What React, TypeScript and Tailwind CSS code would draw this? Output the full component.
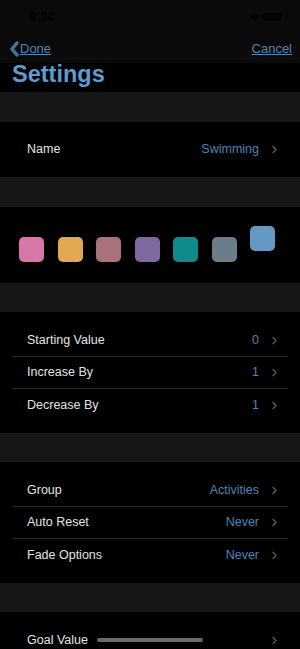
import { ChevronRight } from "lucide-react";

const font = { fontFamily: '"Liberation Sans", Arial, sans-serif' };

const swatches = ["#d677a7", "#e2a852", "#a8717b", "#8068a1", "#0f8b8e", "#6c7c89"];

const Band = () => <div className="h-[29.5px] bg-[#161616]" />;

const Row = ({
  label,
  value,
  last
}: {
  label: string;
  value?: string;
  last?: boolean;
}) => {
  return (
    <div className="relative flex h-[32.5px] items-center pl-[27px] pr-[19px]">
      <span className="flex-1 text-[12.5px] text-[#e4e4e4]">{label}</span>
      {value && <span className="text-[12.5px] text-[#4e84b5]">{value}</span>}
      <ChevronRight className="ml-[9px] h-[13px] w-[13px] text-[#5e5e5e]" strokeWidth={2} />
      {!last && <div className="absolute bottom-0 left-[12px] right-[12px] h-px bg-[#2b2b2b]" />}
    </div>
  );
};

const Section = ({ children }: { children: React.ReactNode }) => (
  <div className="bg-black pt-[12px] pb-[11px]">{children}</div>
);

export default function App() {
  return (
    <div className="relative h-[649px] w-[300px] overflow-hidden bg-black" style={font}>
      <div className="h-[63px] bg-[#0a0a0a]">
        <div className="flex h-[34px] items-center justify-between pl-[29px] pr-[19px]">
          <span className="text-[13px] font-bold text-[#020202]">9:30</span>
          <div className="flex items-center gap-[3px]">
            <svg width="11" height="8" viewBox="0 0 11 8">
              <path d="M0.5 3 Q5.5 -1.5 10.5 3 L5.5 8 Z" fill="#030303" />
            </svg>
            <div className="h-[8px] w-[18px] rounded-[2px] bg-[#030303]" />
          </div>
        </div>
        <div className="flex items-center justify-between pl-[9px] pr-[8px] pt-[5px]">
          <div className="flex items-center">
            <svg width="11" height="16" viewBox="0 0 11 16">
              <path d="M8 2 L3 8 L8 14" fill="none" stroke="#3f74a6" strokeWidth="3.5" strokeLinecap="round" strokeLinejoin="round" />
            </svg>
            <span className="text-[13px] text-[#4f86b8] underline">Done</span>
          </div>
          <span className="text-[13px] text-[#4f86b8] underline">Cancel</span>
        </div>
      </div>
      <div className="flex h-[29px] items-start bg-black pl-[12px]">
        <h1 className="text-[23.5px] font-bold leading-none text-[#5f9bd0]">Settings</h1>
      </div>

      <Band />
      <Section>
        <Row label="Name" value="Swimming" last />
      </Section>
      <Band />
      <div className="flex h-[76px] items-end gap-[13.5px] bg-black pb-[21px] pl-[19px]">
        {swatches.map((c) => (
          <div key={c} className="h-[25px] w-[25px] rounded-[5px]" style={{ backgroundColor: c }} />
        ))}
        <div className="mb-[11px] h-[25px] w-[25px] rounded-[5px] bg-[#6599c5]" />
      </div>
      <Band />
      <Section>
        <Row label="Starting Value" value="0" />
        <Row label="Increase By" value="1" />
        <Row label="Decrease By" value="1" last />
      </Section>
      <Band />
      <Section>
        <Row label="Group" value="Activities" />
        <Row label="Auto Reset" value="Never" />
        <Row label="Fade Options" value="Never" last />
      </Section>
      <Band />
      <Section>
        <Row label="Goal Value" last />
      </Section>

      <div className="absolute bottom-[7px] left-[97px] h-[4px] w-[106px] rounded-full bg-[#6b6b6b]" />
    </div>
  );
}
